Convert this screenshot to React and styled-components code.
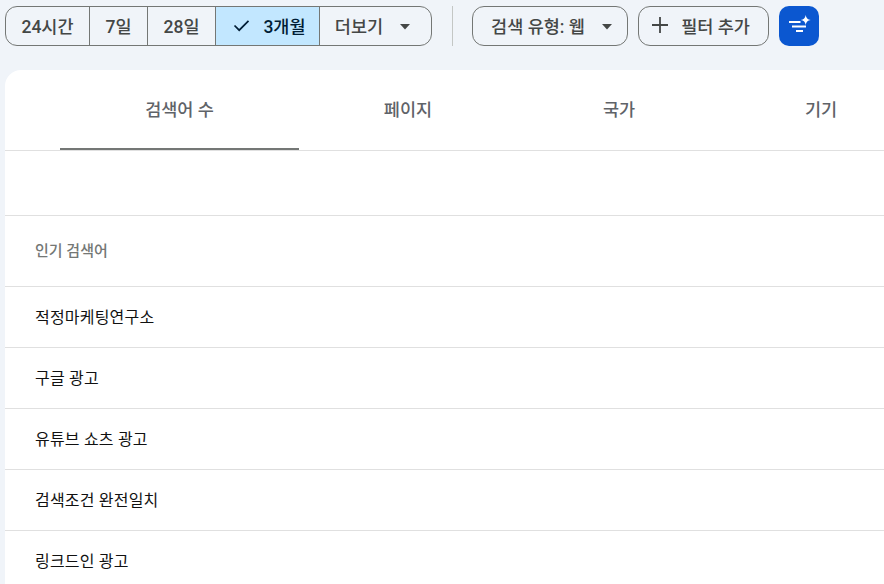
import React from 'react'
import styled, { createGlobalStyle } from 'styled-components'

const GlobalStyle = createGlobalStyle`
  html, body {
    margin: 0;
    padding: 0;
    height: 100%;
    overflow: hidden;
    background: #f0f4f9;
    font-family: Roboto, "Noto Sans CJK KR", sans-serif;
  }
`

const Page = styled.div`
  width: 884px;
  height: 584px;
  overflow: hidden;
  padding: 6px 0 0 5px;
  box-sizing: border-box;
`

const Toolbar = styled.div`
  display: flex;
  align-items: center;
  height: 40px;
`

const Segmented = styled.div`
  display: flex;
  height: 40px;
  box-sizing: border-box;
  border: 1px solid #747775;
  border-radius: 12px;
  overflow: hidden;
`

const Segment = styled.div`
  display: flex;
  align-items: center;
  justify-content: center;
  gap: ${props => props.$gap || 0}px;
  width: ${props => props.$width}px;
  box-sizing: border-box;
  padding: 0 ${props => props.$right || 0}px 2px ${props => props.$left || 0}px;
  border-left: ${props => (props.$first ? 'none' : '1px solid #747775')};
  background: ${props => (props.$active ? '#c2e7ff' : 'transparent')};
  color: ${props => (props.$active ? '#001d35' : '#444746')};
  font-size: 17.5px;
  font-weight: 500;
  white-space: nowrap;
`

const Divider = styled.div`
  width: 1px;
  height: 40px;
  margin: 0 19px 0 20px;
  background: #c4c7c5;
`

const Chip = styled.div`
  display: flex;
  align-items: center;
  justify-content: center;
  gap: ${props => props.$gap}px;
  width: ${props => props.$width}px;
  height: 40px;
  box-sizing: border-box;
  padding: 0 ${props => props.$right || 0}px 2px ${props => props.$left || 0}px;
  margin-right: 10px;
  border: 1px solid #747775;
  border-radius: 12px;
  color: #444746;
  font-size: 17.5px;
  font-weight: 500;
  white-space: nowrap;
`

const AiButton = styled.div`
  display: flex;
  align-items: center;
  justify-content: center;
  width: 40px;
  height: 40px;
  border-radius: 10px;
  background: #0b57d0;
`

const Card = styled.div`
  margin-top: 24px;
  width: 920px;
  height: 520px;
  background: #fff;
  border-radius: 16px 0 0 0;
`

const Tabs = styled.div`
  display: flex;
  height: 81px;
  box-sizing: border-box;
  padding-left: 55px;
  border-bottom: 1px solid #e0e0e0;
`

const Tab = styled.div`
  display: flex;
  align-items: center;
  justify-content: center;
  width: ${props => props.$width}px;
  height: 80px;
  box-sizing: border-box;
  color: #5f6368;
  font-size: 17.5px;
  font-weight: 500;
  white-space: nowrap;
  padding-bottom: ${props => (props.$active ? '1px' : '3px')};
  border-bottom: ${props => (props.$active ? '2px solid #747775' : 'none')};
`

const Spacer = styled.div`
  height: 64px;
  border-bottom: 1px solid #e0e0e0;
`

const TableHead = styled.div`
  display: flex;
  align-items: center;
  height: 71px;
  padding: 0 0 3px 30px;
  box-sizing: border-box;
  border-bottom: 1px solid #e0e0e0;
  color: #747775;
  font-size: 15px;
  font-weight: 500;
`

const Row = styled.div`
  display: flex;
  align-items: center;
  height: 61px;
  box-sizing: border-box;
  padding: 0 0 3px 30px;
  border-bottom: 1px solid #e0e0e0;
  color: #111;
  font-size: 16px;
  letter-spacing: 0.2px;
  font-weight: 400;
`

const CaretIcon = styled.svg`
  margin-top: 3px;
`

const Caret = () => (
  <CaretIcon width="12" height="6" viewBox="0 0 12 6">
    <path d="M1 0h10L6 5.5z" fill="#444746" />
  </CaretIcon>
)

const Check = () => (
  <svg width="18" height="18" viewBox="0 0 18 18">
    <path d="M1.5 9.5l4.7 4.7 9.3-9.3" fill="none" stroke="#001d35" strokeWidth="1.7" />
  </svg>
)

const Plus = () => (
  <svg width="16" height="16" viewBox="0 0 16 16">
    <path d="M8 0v16M0 8h16" fill="none" stroke="#444746" strokeWidth="1.8" />
  </svg>
)

const Sparkle = () => (
  <svg width="24" height="24" viewBox="0 0 24 24" fill="#fff">
    <path d="M18.7 1c.5 3 1.9 4.5 5 5-3.1.5-4.5 2-5 5-.5-3-1.9-4.5-5-5 3.1-.5 4.5-2 5-5z" />
    <rect x="2" y="7" width="11.5" height="2" />
    <rect x="5" y="11.5" width="14" height="2" />
    <rect x="9" y="16" width="7" height="2" />
  </svg>
)

const queries = ['적정마케팅연구소', '구글 광고', '유튜브 쇼츠 광고', '검색조건 완전일치', '링크드인 광고']

const App = () => (
  <Page>
    <GlobalStyle />
    <Toolbar>
      <Segmented>
        <Segment $first $width={83}>24시간</Segment>
        <Segment $width={58}>7일</Segment>
        <Segment $width={68}>28일</Segment>
        <Segment $width={104} $active $gap={12} $left={4}><Check />3개월</Segment>
        <Segment $width={112} $gap={16} $right={5}>더보기<Caret /></Segment>
      </Segmented>
      <Divider />
      <Chip $width={156} $gap={16} $left={4}>검색 유형: 웹<Caret /></Chip>
      <Chip $width={131} $gap={13} $right={5}><Plus />필터 추가</Chip>
      <AiButton><Sparkle /></AiButton>
    </Toolbar>
    <Card>
      <Tabs>
        <Tab $active $width={239}>검색어 수</Tab>
        <Tab $width={218}>페이지</Tab>
        <Tab $width={204}>국가</Tab>
        <Tab $width={200}>기기</Tab>
      </Tabs>
      <Spacer />
      <TableHead>인기 검색어</TableHead>
      {queries.map(query => <Row key={query}>{query}</Row>)}
    </Card>
  </Page>
)

export default App
